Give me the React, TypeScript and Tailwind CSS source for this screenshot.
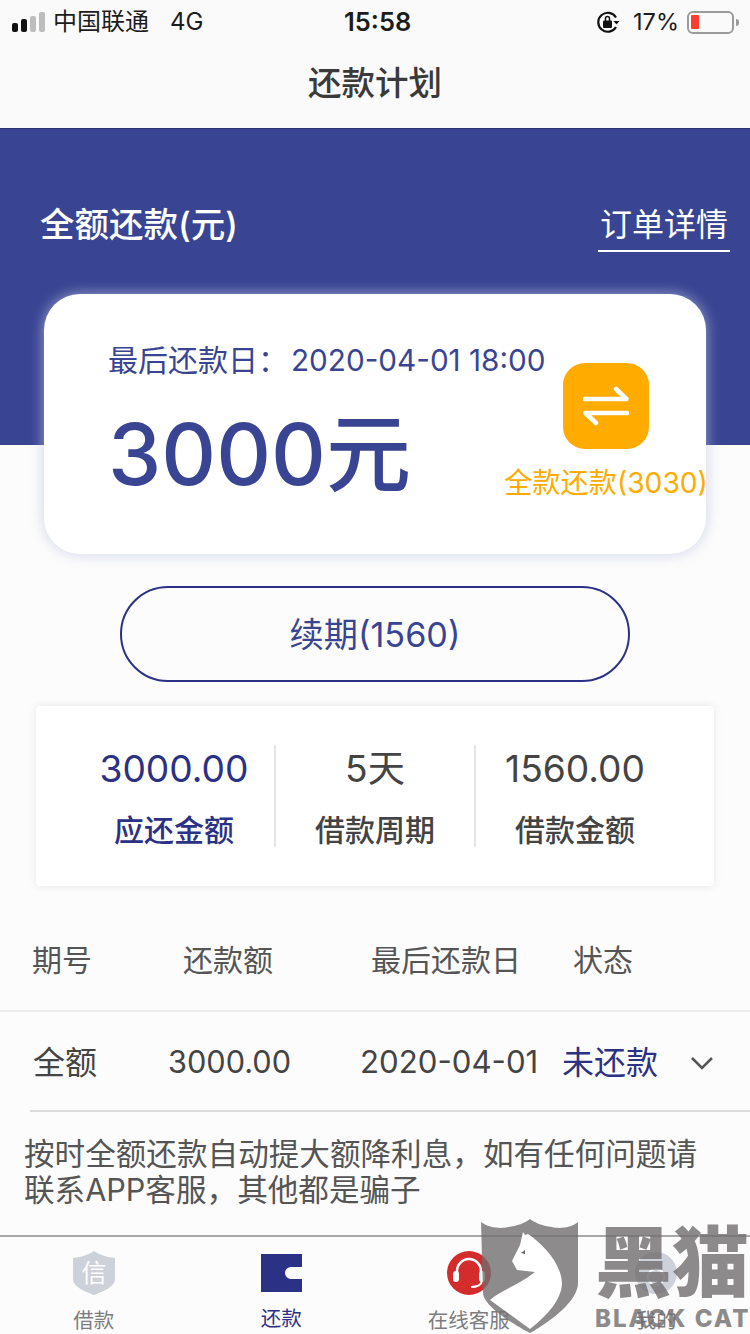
const font = { fontFamily: '"Inter","Noto Sans CJK SC",sans-serif' };

function Stat({ value, label, active, divider }: { value: string; label: string; active?: boolean; divider?: boolean }) {
  return (
    <div className={`flex h-[102px] w-[200px] flex-col items-center ${divider ? "border-l-2 border-[#e4e4e4]" : ""}`}>
      <div className={`mt-[-1px] text-[37.200px] leading-[50px] ${active ? "text-[#2b3184]" : "text-[#444444]"}`}>{value}</div>
      <div className={`mt-[14px] text-[30px] leading-[44px] font-medium ${active ? "text-[#2b3184]" : "text-[#444444]"}`}>{label}</div>
    </div>
  );
}

function Tab({ label, active, children }: { label: string; active?: boolean; children: React.ReactNode }) {
  return (
    <div className="flex w-[187.500px] flex-col items-center">
      <div className="flex h-[44px] w-[44px] items-center justify-center">{children}</div>
      <div className={`mt-[11px] text-[20.500px] leading-[30px] ${active ? "text-[#2b3184]" : "text-[#7d7d7d]"}`}>{label}</div>
    </div>
  );
}

export default function App() {
  return (
    <div style={font} className="relative h-[1334px] w-[750px] overflow-hidden bg-[#fcfcfc]">
      {/* status bar */}
      <div className="flex h-[44px] items-center bg-[#fafafa] text-[#1c1c1c]">
        <div className="ml-[12px] flex items-end gap-[3px]">
          <span className="h-[9px] w-[6px] rounded-[2px] bg-[#111]" />
          <span className="h-[13px] w-[6px] rounded-[2px] bg-[#111]" />
          <span className="h-[16px] w-[6px] rounded-[2px] bg-[#bdbdbd]" />
          <span className="h-[20px] w-[6px] rounded-[2px] bg-[#bdbdbd]" />
        </div>
        <span className="ml-[8px] text-[24px] leading-none">中国联通</span>
        <span className="ml-[21px] text-[24px] leading-none">4G</span>
        <span className="absolute left-[344px] text-[25.500px] leading-none font-semibold">15:58</span>
        <div className="ml-auto flex items-center">
          <svg width="24" height="24" viewBox="0 0 24 24" fill="none" stroke="#111" strokeWidth="2.200">
            <path d="M20 7.500A9.500 9.500 0 1 0 20 17" />
            <path d="M17.500 11h6l-3 3.500z" fill="#111" stroke="none" />
            <rect x="7" y="10.500" width="9" height="7.500" rx="1" fill="#111" stroke="none" />
            <path d="M9.500 11V8.500a2 2 0 0 1 4 0V11" strokeWidth="1.500" />
          </svg>
          <span className="ml-[13px] text-[23.500px] leading-none">17%</span>
          <div className="ml-[8px] flex h-[23px] w-[47px] items-center rounded-[6px] border-2 border-[#9b9b9b] pl-[2px]">
            <span className="h-[14px] w-[8px] rounded-[1px] bg-[#ff3b30]" />
          </div>
          <span className="mr-[11px] ml-[2px] h-[7px] w-[3px] rounded-r-[3px] bg-[#9b9b9b]" />
        </div>
      </div>

      {/* nav bar */}
      <div className="flex h-[84px] items-center justify-center bg-[#fafafa] pb-[6px] text-[33.500px] font-medium text-[#3a3a3a]">
        还款计划
      </div>

      {/* blue header */}
      <div className="h-[317px] border-t border-[#2a3370] bg-[#394592]">
        <div className="flex items-start justify-between pt-[72px] pr-[20px] pl-[40px] text-white">
          <div className="text-[34.500px] leading-[48px] font-medium">全额还款(元)</div>
          <div className="border-b-2 border-white px-[2px] pb-[1px] text-[32px] leading-[48px]">订单详情</div>
        </div>
      </div>

      {/* amount card */}
      <div className="relative mx-[44px] mt-[-151px] flex h-[260px] rounded-[36px] bg-white shadow-[0_0_14px_rgba(190,195,225,0.75)]">
        <div className="pt-[46px] pl-[64px] text-[#394592]">
          <div className="text-[30px] leading-[40px] whitespace-nowrap">
            最后还款日：<span className="ml-[3px] text-[29.700px]">2020-04-01 18:00</span>
          </div>
          <div className="mt-[20px] text-[85px] leading-[110px] font-medium">3000元</div>
        </div>
        <div className="absolute top-[69px] right-[-1px] flex w-[202px] flex-col items-center">
          <div className="flex h-[86px] w-[86px] items-center justify-center rounded-[22px] bg-[#ffab00]">
            <svg width="46" height="42" viewBox="0 0 46 42" fill="none" stroke="white" strokeWidth="4.500" strokeLinecap="round" strokeLinejoin="round">
              <path d="M2 14h41.500L33 4" />
              <path d="M44 28H2.500L13 38" />
            </svg>
          </div>
          <div className="mt-[14px] text-[28.200px] leading-[40px] whitespace-nowrap text-[#ffab00]">全款还款(3030)</div>
        </div>
      </div>

      {/* renew button */}
      <div className="mx-[120px] mt-[32px] flex h-[96px] items-center justify-center rounded-[48px] border-2 border-[#2b3184] pt-[2px] text-[34.200px] text-[#394592]">
        续期(1560)
      </div>

      {/* stats card */}
      <div className="mx-[36px] mt-[24px] flex h-[180px] items-center justify-center rounded-[4px] bg-white pr-[2px] shadow-[0_0_10px_rgba(0,0,0,0.09)]">
        <Stat value="3000.00" label="应还金额" active />
        <Stat value="5天" label="借款周期" divider />
        <Stat value="1560.00" label="借款金额" divider />
      </div>

      {/* table header */}
      <div className="relative flex h-[126px] items-center border-b-2 border-[#ececec] pt-[24px] text-[30px] text-[#555555]">
        <span className="ml-[32px] w-[151px]">期号</span>
        <span className="w-[188px]">还款额</span>
        <span className="w-[202px]">最后还款日</span>
        <span>状态</span>
      </div>

      {/* table row */}
      <div className="ml-[30px] flex h-[100px] items-center border-b-2 border-[#dcdcdc] pt-[3px] text-[#444444]">
        <span className="ml-[3px] w-[135px] text-[32px]">全额</span>
        <span className="w-[192px] text-[30.700px]">3000.00</span>
        <span className="w-[202px] text-[31.200px] whitespace-nowrap">2020-04-01</span>
        <span className="text-[32px] text-[#2b3184]">未还款</span>
        <svg className="ml-[32px]" width="24" height="14" viewBox="0 0 24 14" fill="none" stroke="#555" strokeWidth="2.500">
          <path d="M2 2l10 10L22 2" />
        </svg>
      </div>

      {/* note */}
      <div className="mt-[24px] w-[700px] pl-[24px] text-[30.600px] leading-[36px] text-[#555555]">
        按时全额还款自动提大额降利息，如有任何问题请联系APP客服，其他都是骗子
      </div>

      {/* tab bar */}
      <div className="absolute right-0 bottom-0 left-0 flex h-[99px] border-t-2 border-[#a9a9a9] bg-[#fcfcfc] pt-[14px]">
        <Tab label="借款">
          <svg width="44" height="44" viewBox="0 0 44 44">
            <path d="M22 0C26 3 34 6 43 7V28C43 36 30 41 22 44C14 41 1 36 1 28V7C10 6 18 3 22 0Z" fill="#cdd1da" />
            <text x="22" y="31" textAnchor="middle" fontSize="25" fill="#ffffff" fontFamily="Noto Sans CJK SC">信</text>
          </svg>
        </Tab>
        <Tab label="还款" active>
          <svg width="41" height="38" viewBox="0 0 41 38" className="mt-[2px]">
            <path d="M0 0H41V13H30A6 6 0 0 0 30 25H41V38H0Z" fill="#2b3184" />
          </svg>
        </Tab>
        <Tab label="在线客服">
          <svg width="44" height="44" viewBox="0 0 44 44">
            <circle cx="22" cy="22" r="22" fill="#d42c2c" />
            <path d="M10 24V20A12 12 0 0 1 34 20V24" fill="none" stroke="white" strokeWidth="2.500" />
            <rect x="6" y="20" width="6" height="11" rx="3" fill="white" />
            <rect x="32" y="20" width="6" height="11" rx="3" fill="white" />
            <path d="M35 30C34 35 29 36 24 36" fill="none" stroke="white" strokeWidth="2" />
          </svg>
        </Tab>
        <Tab label="我的">
          <svg width="44" height="44" viewBox="0 0 44 44">
            <circle cx="22" cy="22" r="21" fill="#cdd1da" />
            <circle cx="22" cy="26" r="8" fill="none" stroke="white" strokeWidth="2" />
          </svg>
        </Tab>
      </div>

      {/* watermark */}
      <div className="pointer-events-none absolute top-[1219px] left-[481px] flex">
        <svg width="98" height="115" viewBox="0 0 98 115" className="shrink-0">
          <path
            d="M0 3C8 9 20 10 27 8C36 7 44 4 49 0C54 4 62 7 71 8C78 10 90 9 97 3V64C97 82 70 102 49 114C34 106 3 88 2 74Z"
            fill="#716e6f"
            fillOpacity="0.8"
          />
          <path
            d="M42 13L44 16L47 15C62 25 80 44 81 64C81 80 66 97 49 110L9 81C20 71 38 66 54 53L36 51L31 42L39 26Z"
            fill="#ffffff"
          />
          <path d="M40 34l4-3 0 4z" fill="#666" />
        </svg>
        <div className="mt-[8px] ml-[16px] flex w-[156px] flex-col font-bold text-[#716e6f]">
          <div className="text-[77px] leading-[72px] font-black whitespace-nowrap opacity-80">黑猫</div>
          <div className="mt-[5px] text-[24px] leading-[30px] font-extrabold tracking-[2px] whitespace-nowrap opacity-80">BLACK CAT</div>
        </div>
      </div>
    </div>
  );
}
